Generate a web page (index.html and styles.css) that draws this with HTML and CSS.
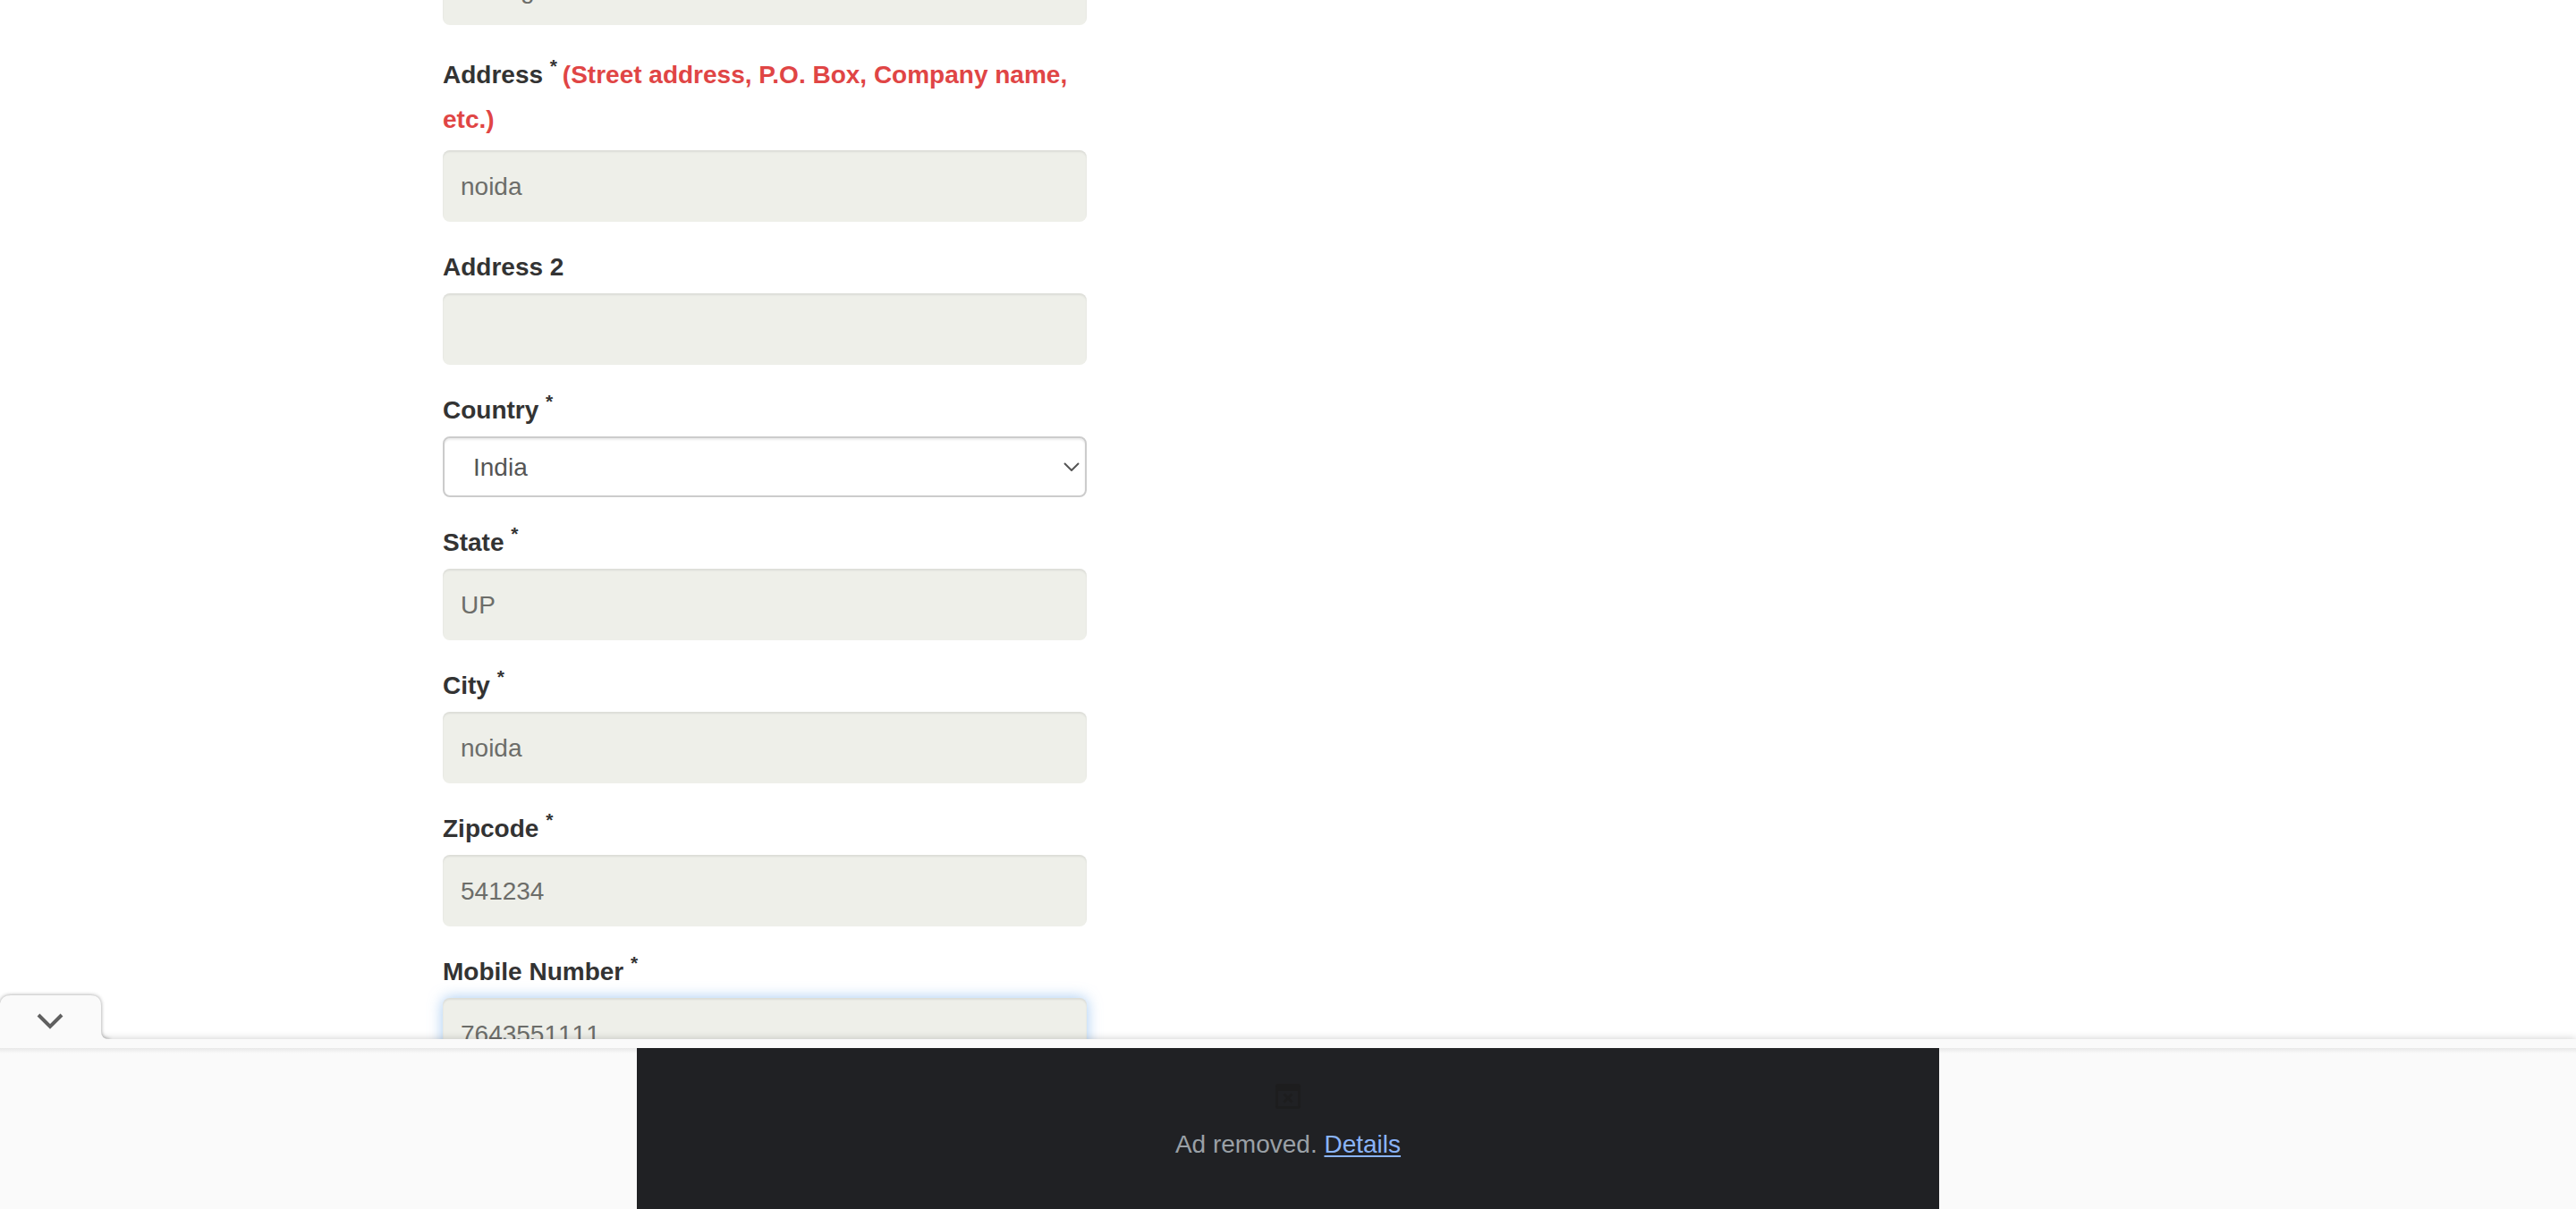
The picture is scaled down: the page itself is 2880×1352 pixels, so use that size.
FILE: index.html
```html
<!DOCTYPE html>
<html lang="en">
<head>
<meta charset="utf-8">
<title>Address details</title>
<link rel="stylesheet" href="styles.css">
</head>
<body>
<main class="page">
  <form class="form">
    <div class="field"><input class="control" type="text" value="testing" aria-label="Name"></div>
    <div class="field">
      <label class="label label-long" for="address">Address <sup>* </sup><span class="hint">(Street address, P.O. Box, Company name, etc.)</span></label>
      <input class="control" id="address" type="text" value="noida">
    </div>
    <div class="field">
      <label class="label" for="address2">Address 2</label>
      <input class="control" id="address2" type="text">
    </div>
    <div class="field">
      <label class="label" for="country">Country <sup>*</sup></label>
      <div class="select-wrap">
        <select class="select" id="country"><option>India</option></select>
        <svg class="select-arrow" viewBox="0 0 18 10" aria-hidden="true"><path d="M1 1l8 8 8-8"/></svg>
      </div>
    </div>
    <div class="field">
      <label class="label" for="state">State <sup>*</sup></label>
      <input class="control" id="state" type="text" value="UP">
    </div>
    <div class="field">
      <label class="label" for="city">City <sup>*</sup></label>
      <input class="control" id="city" type="text" value="noida">
    </div>
    <div class="field">
      <label class="label" for="zip">Zipcode <sup>*</sup></label>
      <input class="control" id="zip" type="text" value="541234">
    </div>
    <div class="field">
      <label class="label" for="mobile">Mobile Number <sup>*</sup></label>
      <input class="control control-active" id="mobile" type="tel" value="7643551111">
    </div>
  </form>
</main>
<aside class="anchor">
  <button class="collapse" type="button" aria-label="Collapse ad">
    <svg class="tab-shape" viewBox="0 0 140 70" aria-hidden="true"><path d="M0 70V20Q2 11 12 11H101Q113 11 113 23V51Q113 60 122 60V70Z"/></svg>
    <svg class="tab-chevron" viewBox="0 0 30 18" aria-hidden="true"><path d="M2 2l13 13 13-13"/></svg>
  </button>
  <div class="anchor-edge"></div>
  <div class="anchor-body">
    <div class="ad">
      <svg class="ad-icon" viewBox="0 0 28 28" aria-hidden="true"><path fill-rule="evenodd" d="M3 0H25Q28 0 28 3V25Q28 28 25 28H3Q0 28 0 25V3Q0 0 3 0ZM3 8V25H25V8Z"/><path class="ad-cross" d="M9.500 11.500l9 9M18.500 11.500l-9 9"/></svg>
      <p class="ad-text">Ad removed. <a href="#details">Details</a></p>
    </div>
  </div>
</aside>
</body>
</html>
```
FILE: styles.css
```css
* { box-sizing: border-box; }

body {
  margin: 0;
  height: 100vh;
  overflow: hidden;
  background: #fff;
  color: #333;
  font: 28px/50px "Liberation Sans", Arial, sans-serif;
}

.page { padding-left: 495px; }

.form {
  width: 720px;
  margin-top: -52px;
  display: flex;
  flex-direction: column;
  gap: 26px;
}

.field { display: flex; flex-direction: column; }

.label {
  margin-bottom: 4px;
  font-weight: bold;
}

.label-long { padding: 5px 0; }

.label sup {
  position: relative;
  top: -12px;
  font-size: 21px;
  line-height: 0;
  vertical-align: baseline;
  white-space: pre;
}

.hint { color: #e04545; }

.control {
  width: 100%;
  height: 80px;
  padding: 2px 20px 0;
  border: 0;
  border-radius: 8px;
  background: #eeefe9;
  box-shadow: inset 0 2px 2px rgba(0, 0, 0, .08);
  color: #6c6d69;
  font: inherit;
  font-kerning: none;
  outline: 0;
}

.control-active {
  box-shadow: inset 0 2px 2px rgba(0, 0, 0, .08), 0 0 16px rgba(102, 165, 233, .6);
}

.select-wrap { position: relative; display: flex; }

.select {
  width: 100%;
  height: 68px;
  padding: 2px 32px 0;
  border: 2px solid #ccc;
  border-radius: 8px;
  background: #fff;
  box-shadow: inset 0 2px 2px rgba(0, 0, 0, .08);
  color: #555;
  font: inherit;
  appearance: none;
}

.select-arrow {
  position: absolute;
  right: 8px;
  top: 29px;
  width: 18px;
  height: 10px;
  fill: none;
  stroke: #555;
  stroke-width: 2;
}

.anchor {
  position: fixed;
  left: 0;
  right: 0;
  bottom: 0;
}

.anchor-edge {
  height: 10px;
  background: #fafafa;
  box-shadow: 0 0 10px rgba(0, 0, 0, .2);
}

.anchor-body {
  position: relative;
  display: flex;
  justify-content: center;
  background: linear-gradient(#e8e8e8, #fafafa 6px);
}

.collapse {
  position: absolute;
  left: 0;
  bottom: 190px;
  z-index: 1;
  width: 140px;
  height: 60px;
  padding: 0;
  border: 0;
  background: none;
  overflow: hidden;
}

.tab-shape {
  position: absolute;
  left: 0;
  top: 0;
  width: 140px;
  height: 70px;
  fill: #fafafa;
  filter: drop-shadow(0 0 2px rgba(0, 0, 0, .4));
}

.tab-chevron {
  position: absolute;
  left: 41px;
  top: 31px;
  width: 30px;
  height: 18px;
  fill: none;
  stroke: #606060;
  stroke-width: 4;
}

.ad {
  width: 1456px;
  height: 180px;
  padding-top: 40px;
  display: flex;
  flex-direction: column;
  align-items: center;
  gap: 15px;
  background: #202124;
}

.ad-icon { width: 28px; height: 28px; fill: #1d1d1e; }
.ad-cross { stroke: #1d1d1e; stroke-width: 3; }

.ad-text { margin: 0; color: #9aa0a6; }
.ad-text a {
  color: #8ab4f8;
  text-decoration-thickness: 2px;
  text-underline-offset: 3px;
}
```
